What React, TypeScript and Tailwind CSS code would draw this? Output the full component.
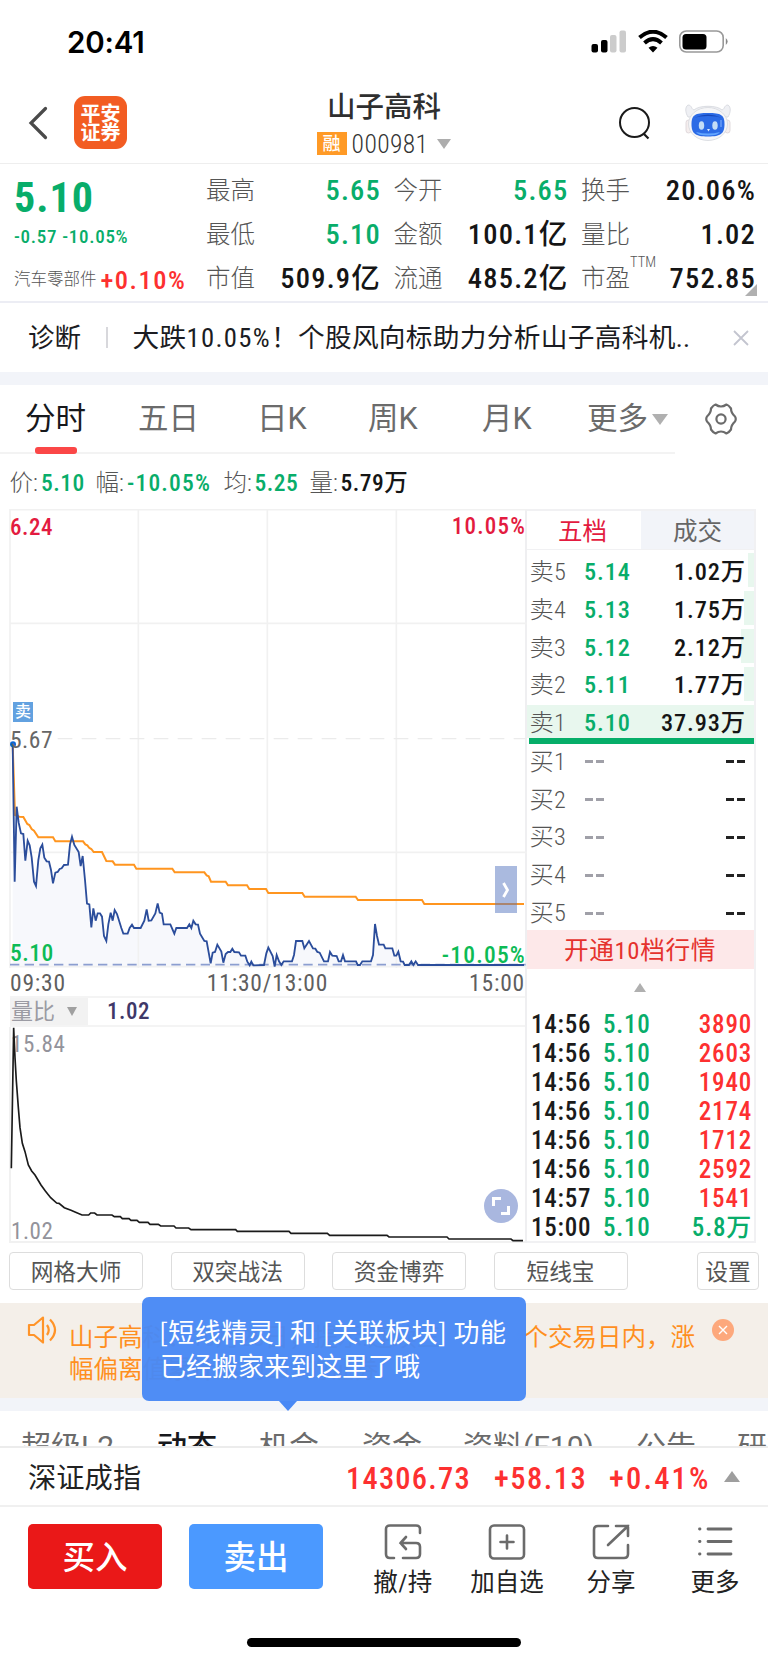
import React from "react";

const stats = [
  [
    { label: "最高", value: "5.65", green: true },
    { label: "今开", value: "5.65", green: true },
    { label: "换手", value: "20.06%" },
  ],
  [
    { label: "最低", value: "5.10", green: true },
    { label: "金额", value: "100.1亿" },
    { label: "量比", value: "1.02" },
  ],
  [
    { label: "市值", value: "509.9亿" },
    { label: "流通", value: "485.2亿" },
    { label: "市盈", value: "752.85", sup: "TTM" },
  ],
];

const periods = [
  { name: "分时", left: "ml-[25px] w-[113px]" },
  { name: "五日", left: "w-[119px]" },
  { name: "日K", left: "w-[111px]" },
  { name: "周K", left: "w-[114px]" },
  { name: "月K", left: "w-[105px]" },
];

const sells = [
  { name: "卖5", price: "5.14", volume: "1.02万", bar: 6 },
  { name: "卖4", price: "5.13", volume: "1.75万", bar: 10 },
  { name: "卖3", price: "5.12", volume: "2.12万", bar: 13 },
  { name: "卖2", price: "5.11", volume: "1.77万", bar: 10 },
  { name: "卖1", price: "5.10", volume: "37.93万", bar: 227 },
];

const buys = ["买1", "买2", "买3", "买4", "买5"];

const trades = [
  ["14:56", "5.10", "3890"],
  ["14:56", "5.10", "2603"],
  ["14:56", "5.10", "1940"],
  ["14:56", "5.10", "2174"],
  ["14:56", "5.10", "1712"],
  ["14:56", "5.10", "2592"],
  ["14:57", "5.10", "1541"],
  ["15:00", "5.10", "5.8万"],
];

const tools = ["网格大师", "双突战法", "资金博弈", "短线宝"];

const infoTabs = [
  { name: "超级L2", width: "w-[136px]" },
  { name: "动态", width: "w-[102px]" },
  { name: "机会", width: "w-[103px]" },
  { name: "资金", width: "w-[101px]" },
  { name: "资料(F10)", width: "w-[173px]" },
  { name: "公告", width: "w-[101px]" },
  { name: "研报", width: "w-[80px]" },
];

const priceLine =
  "11,706 17,1118 23,893 29,941 36,973 43,975 49,1055 56,995 62,1009 68,1045 75,1118 81,1131 88,1053 94,1018 100,1007 106,1046 113,1057 120,1058 126,1083 132,1123 139,1091 146,1089 152,1080 158,1078 165,1068 177,1067 183,1006 189,983 196,1008 209,1029 215,1071 221,1041 228,1113 234,1184 241,1186 247,1255 253,1198 260,1235 266,1213 273,1213 279,1223 285,1281 292,1296 298,1246 305,1211 311,1235 317,1203 324,1215 337,1257 343,1274 356,1274 362,1257 369,1247 375,1257 395,1257 406,1235 413,1201 419,1235 427,1234 439,1213 446,1183 452,1211 459,1214 464,1246 484,1246 496,1274 502,1257 534,1257 541,1246 547,1257 553,1235 560,1246 567,1247 573,1274 586,1296 593,1297 599,1330 605,1363 611,1331 618,1329 625,1307 637,1328 643,1361 650,1335 657,1329 664,1329 670,1319 676,1329 690,1330 696,1340 709,1340 715,1358 722,1369 727,1358 733,1369 765,1368 772,1333 778,1316 791,1341 797,1373 803,1338 810,1357 817,1368 824,1357 849,1357 855,1338 861,1296 880,1296 886,1318 900,1296 912,1318 919,1319 925,1329 932,1331 945,1357 957,1357 963,1329 970,1340 983,1341 989,1357 996,1357 1002,1338 1008,1357 1041,1357 1046,1368 1053,1368 1060,1357 1086,1357 1092,1338 1098,1245 1104,1281 1110,1307 1124,1307 1129,1318 1150,1318 1156,1340 1162,1340 1168,1328 1175,1357 1182,1358 1187,1368 1200,1368 1207,1357 1213,1368 1220,1357 1227,1368 1545,1368";

const averageLine =
  "11,706 18,918 31,923 43,924 55,945 61,948 68,960 75,965 88,985 132,985 139,997 222,997 229,1006 235,1009 241,1017 247,1020 254,1029 279,1029 292,1056 311,1057 318,1067 375,1067 382,1079 490,1079 497,1090 586,1090 593,1099 599,1102 606,1118 650,1118 657,1129 714,1129 721,1140 771,1140 778,1152 880,1152 887,1163 1040,1163 1047,1173 1239,1173 1246,1185 1545,1185";

const ratioLine =
  "7,424 14,2 18,92 22,162 28,242 33,302 40,349 48,374 58,414 68,432 78,444 96,474 109,492 125,512 143,528 150,529 166,542 186,550 198,555 219,564 239,564 245,558 257,558 264,564 309,564 316,569 334,569 340,575 360,575 366,580 384,580 391,586 417,586 423,592 448,592 455,597 495,597 501,603 539,603 546,608 680,608 685,613 840,613 846,619 955,619 962,625 1134,625 1140,630 1314,630 1320,636 1506,636 1512,641 1542,641";

const StatusBar = () => {
  return (
    <div className="flex h-[84px] shrink-0 items-center pl-[67px] pr-[39px]">
      <span className="flex-1 pt-[2px] font-['Inter'] text-[29.5px] font-semibold leading-none tracking-[-0.2px] text-black">
        20:41
      </span>
      <svg width="138" height="24" viewBox="0 0 138 24">
        <rect x="0.5" y="14" width="6.5" height="8.5" rx="2" fill="#000" />
        <rect x="10" y="10" width="6.5" height="12.5" rx="2" fill="#000" />
        <rect x="19" y="5" width="6.5" height="17.5" rx="2" fill="#ccc" />
        <rect x="28.5" y="0.5" width="6.5" height="22" rx="2" fill="#ccc" />
        <path d="M48.5 7.6 Q62 -4.2 75.5 7.6" fill="none" stroke="#000" strokeWidth="4" />
        <path d="M53.5 13 Q62 5.4 70.5 13" fill="none" stroke="#000" strokeWidth="4" />
        <path d="M57.5 17.8 Q62 14 66.5 17.8 L62 22.5 Z" fill="#000" />
        <rect x="88.8" y="1" width="43.4" height="21" rx="6.5" fill="none" stroke="#999" strokeWidth="1.6" />
        <rect x="91.5" y="4" width="24" height="15.5" rx="3.5" fill="#000" />
        <path d="M134.8 8 Q138.5 11.5 134.8 15 Z" fill="#888" />
      </svg>
    </div>
  );
};

const Header = () => {
  return (
    <div className="flex h-[80px] shrink-0 items-start border-b border-[#eeeeee] pl-[28px]">
      <svg className="mt-[22px]" width="20" height="34" viewBox="0 0 20 34" fill="none">
        <path d="M17.5 2.5 L3 17 L17.5 31.5" stroke="#4a4a4a" strokeWidth="3.2" strokeLinecap="round" />
      </svg>
      <div className="ml-[26px] mt-[12px] flex h-[53px] w-[53px] flex-col items-center justify-center rounded-[11px] bg-[#f25c22] pt-[2px] text-[20px] font-bold leading-[19px] text-white">
        <span>平安</span>
        <span>证券</span>
      </div>
      <div className="ml-[120px] flex w-[274px] flex-col items-center">
        <div className="mt-[4px] text-[28.5px] font-medium leading-[40px] text-[#2f2f2f]">山子高科</div>
        <div className="mt-[4px] flex h-[23px] items-center">
          <span className="flex h-[23px] w-[30px] items-center justify-center bg-[#ff9a26] text-[18px] font-medium leading-none text-white">
            融
          </span>
          <span className="ml-[5px] pt-[2px] text-[25.5px] font-light leading-none tracking-[0.4px] text-[#333]">000981</span>
          <svg className="ml-[9px]" width="14" height="10" viewBox="0 0 14 10">
            <path d="M0 0 H14 L7 10 Z" fill="#adadad" />
          </svg>
        </div>
      </div>
      <svg className="ml-[97px] mt-[22px] shrink-0" width="34" height="34" viewBox="0 0 34 34" fill="none">
        <circle cx="16.5" cy="16.5" r="14.5" stroke="#1a1a1a" strokeWidth="2" />
        <path d="M25.5 27.5 L30.5 32.5" stroke="#1a1a1a" strokeWidth="2.2" />
      </svg>
      <svg className="ml-[33px] mt-[20px] shrink-0" width="46" height="38" viewBox="0 0 46 38">
        <path
          d="M3 13 C0 8 0 3 3 1 C7 1 6 5 9 6 C14 1 32 1 37 6 C40 5 39 1 43 1 C46 3 46 8 43 13 Z"
          fill="#eff0f4"
          stroke="#d3d5dc"
          strokeWidth="0.8"
        />
        <rect x="1" y="16" width="5" height="13" rx="2.5" fill="#f5eeee" stroke="#d9d2d5" strokeWidth="0.8" />
        <rect x="40" y="16" width="5" height="13" rx="2.5" fill="#f5eeee" stroke="#d9d2d5" strokeWidth="0.8" />
        <ellipse cx="23" cy="20" rx="19.5" ry="16.5" fill="#f6f6f8" stroke="#d6d8dd" strokeWidth="0.8" />
        <path
          d="M6.500 20 C6.500 11 10 9 23 9 C36 9 39.500 11 39.500 20 C39.500 29.500 36 32.500 23 32.500 C10 32.500 6.500 29.500 6.500 20 Z"
          fill="#2c6be6"
        />
        <path d="M9 14 Q23 7 37 14 Q32 12 23 12 Q14 12 9 14" fill="#1746b8" />
        <path d="M11 28 Q23 31 35 28 Q33 31.500 23 31.500 Q13 31.500 11 28" fill="#63a6ff" />
        <ellipse cx="16.500" cy="21.500" rx="2.700" ry="4.300" fill="#c4ddf6" />
        <ellipse cx="30" cy="21.500" rx="2.700" ry="4.300" fill="#c4ddf6" />
        <path d="M22 25 H25 L23.500 27.500 Z" fill="#dcebff" />
        <path d="M36 16 V23" stroke="#87b6ff" strokeWidth="1" />
      </svg>
    </div>
  );
};

const Quote = () => {
  return (
    <div className="relative flex h-[139px] shrink-0 border-b-2 border-[#ecedf4]">
      <div className="w-[206px] shrink-0 pl-[14px]">
        <div className="mt-[8px] h-[50px] text-[42px] font-bold leading-[52px] tracking-[1px] text-[#08ad6a]">
          5.10
        </div>
        <div className="mt-[3px] h-[24px] whitespace-nowrap text-[19px] font-medium leading-[24px] tracking-[0.7px] text-[#08ad6a]">
          -0.57 -10.05%
        </div>
        <div className="mt-[14px] flex h-[34px] items-center whitespace-nowrap">
          <span className="text-[16.500px] font-light text-[#555]">汽车零部件</span>
          <span className="ml-[4px] text-[26.500px] font-medium leading-none tracking-[1.500px] text-[#fd3030]">+0.10%</span>
        </div>
      </div>
      <div className="mt-[5px] flex flex-col">
        {stats.map((row, index) => {
          return (
            <div key={index} className="flex h-[44.500px] items-center">
              {row.map((item) => {
                return (
                  <div key={item.label} className="mr-[12.500px] flex w-[175px] items-center justify-between">
                    <span className="relative text-[24.500px] font-light leading-none text-[#555]">
                      {item.label}
                      {item.sup && <span className="absolute -top-[11px] left-[49px] text-[14.500px]">{item.sup}</span>}
                    </span>
                    <span
                      className={
                        item.green
                          ? "text-[28.500px] font-medium leading-none tracking-[1.200px] text-[#08ad6a]"
                          : "text-[28.500px] font-medium leading-none tracking-[1.200px] text-[#151515]"
                      }
                    >
                      {item.value}
                    </span>
                  </div>
                );
              })}
            </div>
          );
        })}
      </div>
      <div className="absolute bottom-[5px] right-[11px] h-0 w-0 border-b-[12px] border-l-[12px] border-b-[#b0b0b0] border-l-transparent" />
    </div>
  );
};

const Diagnosis = () => {
  return (
    <div className="flex h-[69px] shrink-0 items-center pl-[28px] text-[26.500px] text-[#1b1c22]">
      <span className="w-[53px] whitespace-nowrap">诊断</span>
      <div className="ml-[25px] h-[21px] w-[1.500px] bg-[#d8d8dc]" />
      <span className="ml-[25px] w-[590px] whitespace-nowrap pt-[1px] text-[26.700px] tracking-[0.300px]">
        大跌<span className="tracking-[1.300px]">10.05%</span>！个股风向标助力分析山子高科机..
      </span>
      <svg className="ml-[10px]" width="16" height="16" viewBox="0 0 16 16">
        <path d="M1 1 L15 15 M15 1 L1 15" stroke="#c3c5cf" strokeWidth="1.800" />
      </svg>
    </div>
  );
};

const PeriodTabs = () => {
  return (
    <div className="flex h-[69px] shrink-0">
      <div className="flex w-[675px] items-center border-b-2 border-[#f3f3f3] pt-[1px] font-stretch-normal text-[30.500px] leading-none text-[#6b6b6b]">
        {periods.map((period, index) => {
          return (
            <div key={period.name} className={period.left}>
              {index === 0 ? (
                <div className="relative text-[#17181c]">
                  {period.name}
                  <div className="absolute left-[10px] top-[43px] h-[7px] w-[42px] rounded-[3px] bg-[#fb4747]" />
                </div>
              ) : (
                period.name
              )}
            </div>
          );
        })}
        <span className="whitespace-nowrap">更多</span>
        <svg className="ml-[4px] shrink-0" width="16" height="11" viewBox="0 0 16 11">
          <path d="M0 0 H16 L8 11 Z" fill="#b0b0b0" />
        </svg>
      </div>
      <svg className="ml-[30px] mt-[18px]" width="32" height="32" viewBox="0 0 32 32" fill="none" stroke="#6b6b6b" strokeWidth="2.200">
        <path
          d="M10.500 1.500 Q16 5.500 21.500 1.500 Q23.500 2 26 5.500 Q26 10 30 13.500 Q31.500 16 30 18.500 Q26 22 26 26.500 Q23.500 30 21.500 30.500 Q16 26.500 10.500 30.500 Q8.500 30 6 26.500 Q6 22 2 18.500 Q0.500 16 2 13.500 Q6 10 6 5.500 Q8.500 2 10.500 1.500 Z"
          strokeLinejoin="round"
        />
        <circle cx="16" cy="16" r="4.600" />
      </svg>
    </div>
  );
};

const PriceInfo = () => {
  return (
    <div className="flex h-[55px] shrink-0 items-center whitespace-nowrap pl-[9.500px] pt-[5px] text-[23.500px] leading-none text-[#555]">
      <span className="w-[31.500px] font-light">价:</span>
      <span className="w-[54.500px] font-medium tracking-[0.500px] text-[#08ad6a]">5.10</span>
      <span className="w-[31.500px] font-light">幅:</span>
      <span className="w-[96.500px] font-medium tracking-[1.200px] text-[#08ad6a]">-10.05%</span>
      <span className="w-[31px] font-light">均:</span>
      <span className="w-[55px] font-medium tracking-[0.500px] text-[#08ad6a]">5.25</span>
      <span className="w-[31px] font-light">量:</span>
      <span className="font-medium tracking-[0.500px] text-[#151515]">5.79万</span>
    </div>
  );
};

const PriceChart = () => {
  return (
    <div className="relative h-[459px]">
      <svg className="block" width="518" height="459" viewBox="0 0 1554 1377" fill="none">
        <polygon points={"11,1372 " + priceLine + " 1545,1372"} fill="#f7f8fc" />
        <path d="M3 2 H1554 M3 343 H1554 M3 1030 H1554 M3 1373 H1554" stroke="#f1f1f1" strokeWidth="5" />
        <path d="M3 0 V1377 M388 0 V1377 M775 0 V1377 M1162 0 V1377" stroke="#f1f1f1" strokeWidth="5" />
        <path d="M146 689 H1550" stroke="#ebebeb" strokeWidth="4" strokeDasharray="44 28" />
        <path d="M3 1367 H1550" stroke="#8c9ed0" strokeWidth="5" strokeDasharray="28 16" />
        <polyline points={averageLine} stroke="#ff951f" strokeWidth="6" />
        <polyline points={priceLine} stroke="#2b4d9b" strokeWidth="5.500" />
        <circle cx="12" cy="706" r="9" fill="#0a66d6" />
      </svg>
      <span className="absolute left-[1px] top-[7px] text-[23px] font-medium leading-[24px] tracking-[0.500px] text-[#e31b40]">6.24</span>
      <span className="absolute -right-[1px] top-[6px] text-[23px] font-medium leading-[24px] tracking-[1.200px] text-[#e31b40]">10.05%</span>
      <span className="absolute left-[4px] top-[193px] flex h-[20px] w-[20px] items-center justify-center bg-[#62a1e0] text-[16px] font-medium text-white">
        卖
      </span>
      <span className="absolute left-[1px] top-[219px] text-[23.500px] leading-[24px] tracking-[0.500px] text-[#666]">5.67</span>
      <span className="absolute left-[1px] top-[432px] text-[23.500px] font-medium leading-[24px] tracking-[0.500px] text-[#0dbb55]">5.10</span>
      <span className="absolute -right-[1px] top-[434px] text-[23.500px] font-medium leading-[24px] tracking-[1.200px] text-[#0dbb55]">-10.05%</span>
      <div className="absolute right-[8px] top-[357px] flex h-[47px] w-[22px] items-center justify-center bg-[#5575c0]/50">
        <svg width="8" height="16" viewBox="0 0 8 16" fill="none">
          <path d="M1.500 1 L5.500 8 L1.500 15" stroke="#fff" strokeWidth="2.800" />
        </svg>
      </div>
    </div>
  );
};

const ChartPanel = () => {
  return (
    <div className="w-[518px] border-r-2 border-[#efeff1]">
      <PriceChart />
      <div className="grid h-[28px] grid-cols-[1fr_auto_1fr] items-center pl-[1px] pt-[3px] text-[23.500px] leading-none tracking-[0.800px] text-[#5f5f5f]">
        <span>09:30</span>
        <span>11:30/13:00</span>
        <span className="text-right">15:00</span>
      </div>
      <div className="ml-[1px] flex h-[31px] border-y-2 border-[#f4f4f4]">
        <div className="flex w-[78px] items-center bg-[#f2f2f2] pl-[1px] text-[22px] leading-none text-[#9b9ba3]">
          量比
          <svg className="ml-[12px]" width="10" height="9" viewBox="0 0 10 9">
            <path d="M0 0 H10 L5 9 Z" fill="#a0a0a0" />
          </svg>
        </div>
        <span className="ml-[19px] text-[23px] font-medium leading-[27px] tracking-[0.500px] text-[#3f3868]">1.02</span>
      </div>
      <div className="relative h-[216px] border-b-2 border-l-2 border-[#f1f1f1]">
        <span className="absolute left-0 top-[6px] text-[23px] leading-[24px] tracking-[0.600px] text-[#93939b]">15.84</span>
        <span className="absolute left-0 top-[193px] text-[23px] leading-[24px] tracking-[0.600px] text-[#93939b]">1.02</span>
        <svg className="relative -left-[2px] block" width="518" height="215" viewBox="0 0 1554 645" fill="none">
          <polyline points={ratioLine} stroke="#1a1a1a" strokeWidth="5" />
        </svg>
        <div className="absolute bottom-[18px] right-[7px] flex h-[34px] w-[34px] items-center justify-center rounded-full bg-[#a9b7df]">
          <svg width="20" height="20" viewBox="0 0 20 20" fill="none" stroke="#fff" strokeWidth="3">
            <path d="M2.500 10 V2.500 H10 M17.500 10 V17.500 H10" />
          </svg>
        </div>
      </div>
    </div>
  );
};

const OrderBook = () => {
  return (
    <div className="flex h-[734px] w-[229px] flex-col border-b-2 border-r-2 border-t-2 border-[#f1f1f3]">
      <div className="flex h-[39px] shrink-0 border-b border-[#f1f1f3] text-[24.500px] leading-none">
        <div className="flex w-[114px] items-center justify-center pr-[3px] pt-[5px] text-[#e31b40]">五档</div>
        <div className="flex flex-1 items-center justify-center bg-[#f2f4f9] pt-[5px] text-[#666]">成交</div>
      </div>
      <div className="h-[188px] shrink-0">
        {sells.map((sell) => {
          return (
            <div key={sell.name} className="relative flex h-[37.900px] items-center pl-[2.500px] pt-[6px] text-[24.300px] leading-none">
              <div className="absolute bottom-[1px] right-0 top-[3px] bg-[#e8f7ee]" style={{ width: sell.bar }} />
              <span className="relative w-[54.500px] font-light tracking-[0.300px] text-[#555]">{sell.name}</span>
              <span className="relative font-medium tracking-[0.900px] text-[#08ad6a]">{sell.price}</span>
              <span className="relative ml-auto mr-[8px] font-medium tracking-[0.900px] text-[#151515]">{sell.volume}</span>
            </div>
          );
        })}
      </div>
      <div className="relative ml-[2px] h-[6px] shrink-0 bg-[#06ae69]" />
      <div className="-mt-[1px] h-[187px] shrink-0">
        {buys.map((buy) => {
          return (
            <div key={buy} className="flex h-[37.800px] items-center pl-[2.500px] text-[24.300px] leading-none">
              <span className="w-[55.500px] font-light tracking-[0.300px] text-[#555]">{buy}</span>
              <div className="flex gap-[3px]">
                <i className="h-[3px] w-[8px] bg-[#a0a0a8]" />
                <i className="h-[3px] w-[8px] bg-[#a0a0a8]" />
              </div>
              <div className="ml-auto mr-[9px] flex gap-[3px]">
                <i className="h-[3px] w-[8px] bg-[#222]" />
                <i className="h-[3px] w-[8px] bg-[#222]" />
              </div>
            </div>
          );
        })}
      </div>
      <div className="flex h-[38.500px] shrink-0 items-center justify-center bg-[#fde8e9] pr-[1px] pt-[5px] text-[24.700px] leading-none tracking-[0.600px] text-[#e5322d]">
        开通10档行情
      </div>
      <div className="flex h-[41.500px] shrink-0 items-center justify-center pb-[3px] pr-[2px]">
        <svg width="12" height="9" viewBox="0 0 12 9">
          <path d="M6 0 L12 9 H0 Z" fill="#b0b0b0" />
        </svg>
      </div>
      {trades.map((trade, index) => {
        return (
          <div key={index} className="flex h-[29px] shrink-0 items-center pl-[4px] pr-[2px] text-[25px] font-medium leading-none tracking-[0.800px]">
            <span className="w-[72px] text-[#1b1b1b]">{trade[0]}</span>
            <span className="text-[#08ad6a]">{trade[1]}</span>
            <span className={trade[2].includes("万") ? "ml-auto text-[#08ad6a]" : "ml-auto text-[#fd3030]"}>{trade[2]}</span>
          </div>
        );
      })}
    </div>
  );
};

const Notice = () => {
  return (
    <div className="relative flex h-[95px] shrink-0 bg-[#f4efe9] text-[24.500px] leading-[32px] text-[#ff8f1f]">
      <svg className="ml-[27px] mt-[12px]" width="30" height="30" viewBox="0 0 30 30" fill="none" stroke="#ff9429" strokeWidth="2.200" strokeLinejoin="round">
        <path d="M2 10 V20 H7 L16 27.500 V2.500 L7 10 Z" />
        <path d="M20 10 Q23.500 15 20 20 M23 4.500 Q33 15 23 25.500" />
      </svg>
      <div className="ml-[12px] mt-[19px] whitespace-nowrap">
        <div className="flex">
          山子高
          <span className="w-[381px]">科：10月25日，提示:连续三</span>
          个交易日内，涨
        </div>
        <div>幅偏离值累计达到20%的证券</div>
      </div>
      <div className="absolute right-[34px] top-[16px] flex h-[22px] w-[22px] items-center justify-center rounded-full bg-[#fda87c]">
        <svg width="10" height="10" viewBox="0 0 10 10">
          <path d="M1 1 L9 9 M9 1 L1 9" stroke="#fff" strokeWidth="1.400" />
        </svg>
      </div>
      <div className="absolute -top-[6px] left-[142px] z-10 h-[104px] w-[384px] rounded-[7px] bg-[#4888f5]/96 pl-[17px] pt-[19px] text-[26px] leading-[34px] text-white">
        <div className="whitespace-nowrap pb-[4px] font-['Noto_Sans_CJK_SC'] leading-[30px] tracking-[0.500px]">
          [短线精灵] 和 [关联板块] 功能
        </div>
        <div className="whitespace-nowrap pl-[1px]">已经搬家来到这里了哦</div>
        <div className="absolute -bottom-[10px] left-[137px] h-0 w-0 border-x-[9px] border-t-[10px] border-x-transparent border-t-[#4888f5]" />
      </div>
    </div>
  );
};

const BottomBar = () => {
  return (
    <div className="flex h-[158px] shrink-0 items-start pt-[17px]">
      <button className="ml-[28px] h-[65px] w-[134px] rounded-[5px] bg-[#ea1818] pt-[4px] text-[32.500px] font-medium text-white">买入</button>
      <button className="ml-[27px] h-[65px] w-[134px] rounded-[5px] bg-[#4b99ff] pt-[4px] text-[32.500px] font-medium text-white">卖出</button>
      <div className="ml-[28px] flex text-[24.500px] leading-[30px] text-[#222]">
        <div className="flex w-[104px] flex-col items-center">
          <svg width="38" height="36" viewBox="0 0 38 36" fill="none" stroke="#6b6b6b" strokeWidth="2.600" strokeLinecap="round">
            <path d="M36 9 V5 Q36 1.500 32 1.500 H6 Q2 1.500 2 5 V30 Q2 34 6 34 H10" />
            <path d="M22 13 L16.500 19 L22 25 M16.500 19 H32 Q36 19 36 23 V30 Q36 34 32 34 H19" />
          </svg>
          <span className="mt-[8px] tracking-[0.500px]">撤/持</span>
        </div>
        <div className="flex w-[104px] flex-col items-center">
          <svg width="38" height="36" viewBox="0 0 38 36" fill="none" stroke="#6b6b6b" strokeWidth="2.600" strokeLinecap="round">
            <rect x="2" y="1.500" width="34" height="33" rx="4" />
            <path d="M19 11.500 V24.500 M12.500 18 H25.500" />
          </svg>
          <span className="mt-[8px]">加自选</span>
        </div>
        <div className="flex w-[104px] flex-col items-center">
          <svg width="38" height="36" viewBox="0 0 38 36" fill="none" stroke="#6b6b6b" strokeWidth="2.600" strokeLinecap="round">
            <path d="M16 2 H6 Q2 2 2 6 V30 Q2 34 6 34 H32 Q36 34 36 30 V21" />
            <path d="M24 2 H36 V12 M36 2 L16 21" />
          </svg>
          <span className="mt-[8px]">分享</span>
        </div>
        <div className="flex w-[104px] flex-col items-center">
          <svg width="38" height="36" viewBox="0 0 38 36" fill="none" stroke="#6b6b6b" strokeWidth="2.800" strokeLinecap="round">
            <path d="M12 5 H35 M12 17.500 H35 M12 30 H35 M3.500 5 H4 M3.500 17.500 H4 M3.500 30 H4" />
          </svg>
          <span className="mt-[8px]">更多</span>
        </div>
      </div>
    </div>
  );
};

const App = () => {
  return (
    <div className="flex h-[1663px] w-[768px] flex-col overflow-hidden bg-white font-['Roboto','Noto_Sans_CJK_SC',sans-serif] font-stretch-semi-condensed">
      <StatusBar />
      <Header />
      <Quote />
      <Diagnosis />
      <div className="h-[13px] shrink-0 bg-[#f2f4f9]" />
      <PeriodTabs />
      <PriceInfo />
      <div className="flex h-[734px] shrink-0 pl-[9px]">
        <ChartPanel />
        <OrderBook />
      </div>
      <div className="flex h-[60px] shrink-0 pl-[9px] pt-[9px] text-[22.700px] leading-none text-[#555]">
        {tools.map((tool) => {
          return (
            <button key={tool} className="mr-[27.500px] h-[38px] w-[134px] rounded-[4px] border-[1.500px] border-[#dddddd] pt-[4px]">
              {tool}
            </button>
          );
        })}
        <button className="ml-[42px] h-[38px] w-[62px] rounded-[4px] border-[1.500px] border-[#dddddd] pt-[4px]">设置</button>
      </div>
      <Notice />
      <div className="h-[13px] shrink-0 bg-[#f2f4f9]" />
      <div className="h-[37px] shrink-0 overflow-hidden border-b-2 border-[#ececec] pl-[21px] pt-[19px]">
        <div className="flex whitespace-nowrap font-stretch-normal text-[30px] leading-[34px] text-[#6b6b6b]">
          {infoTabs.map((tab) => {
            return (
              <div key={tab.name} className="shrink-0">
                <div className={tab.width}>
                  {tab.name === "动态" ? <span className="font-medium text-[#17181c]">{tab.name}</span> : tab.name}
                </div>
              </div>
            );
          })}
        </div>
      </div>
      <div className="flex h-[59px] shrink-0 items-center border-b-2 border-[#f0f0f0] pl-[28px] pr-[28px] pt-[6px] leading-none">
        <span className="flex-1 text-[28.300px] text-[#222]">深证成指</span>
        <div className="flex items-center text-[30.500px] font-medium text-[#fd3030]">
          <span className="w-[148px] tracking-[1.200px]">14306.73</span>
          <span className="w-[115px] tracking-[1.500px]">+58.13</span>
          <span className="w-[115px] tracking-[2.200px]">+0.41%</span>
        </div>
        <svg className="-mt-[6px]" width="16" height="11" viewBox="0 0 16 11">
          <path d="M8 0 L16 11 H0 Z" fill="#9e9e9e" />
        </svg>
      </div>
      <BottomBar />
      <div className="ml-[247px] mt-[-27px] h-[9px] w-[274px] shrink-0 rounded-full bg-black" />
    </div>
  );
};

export default App;
